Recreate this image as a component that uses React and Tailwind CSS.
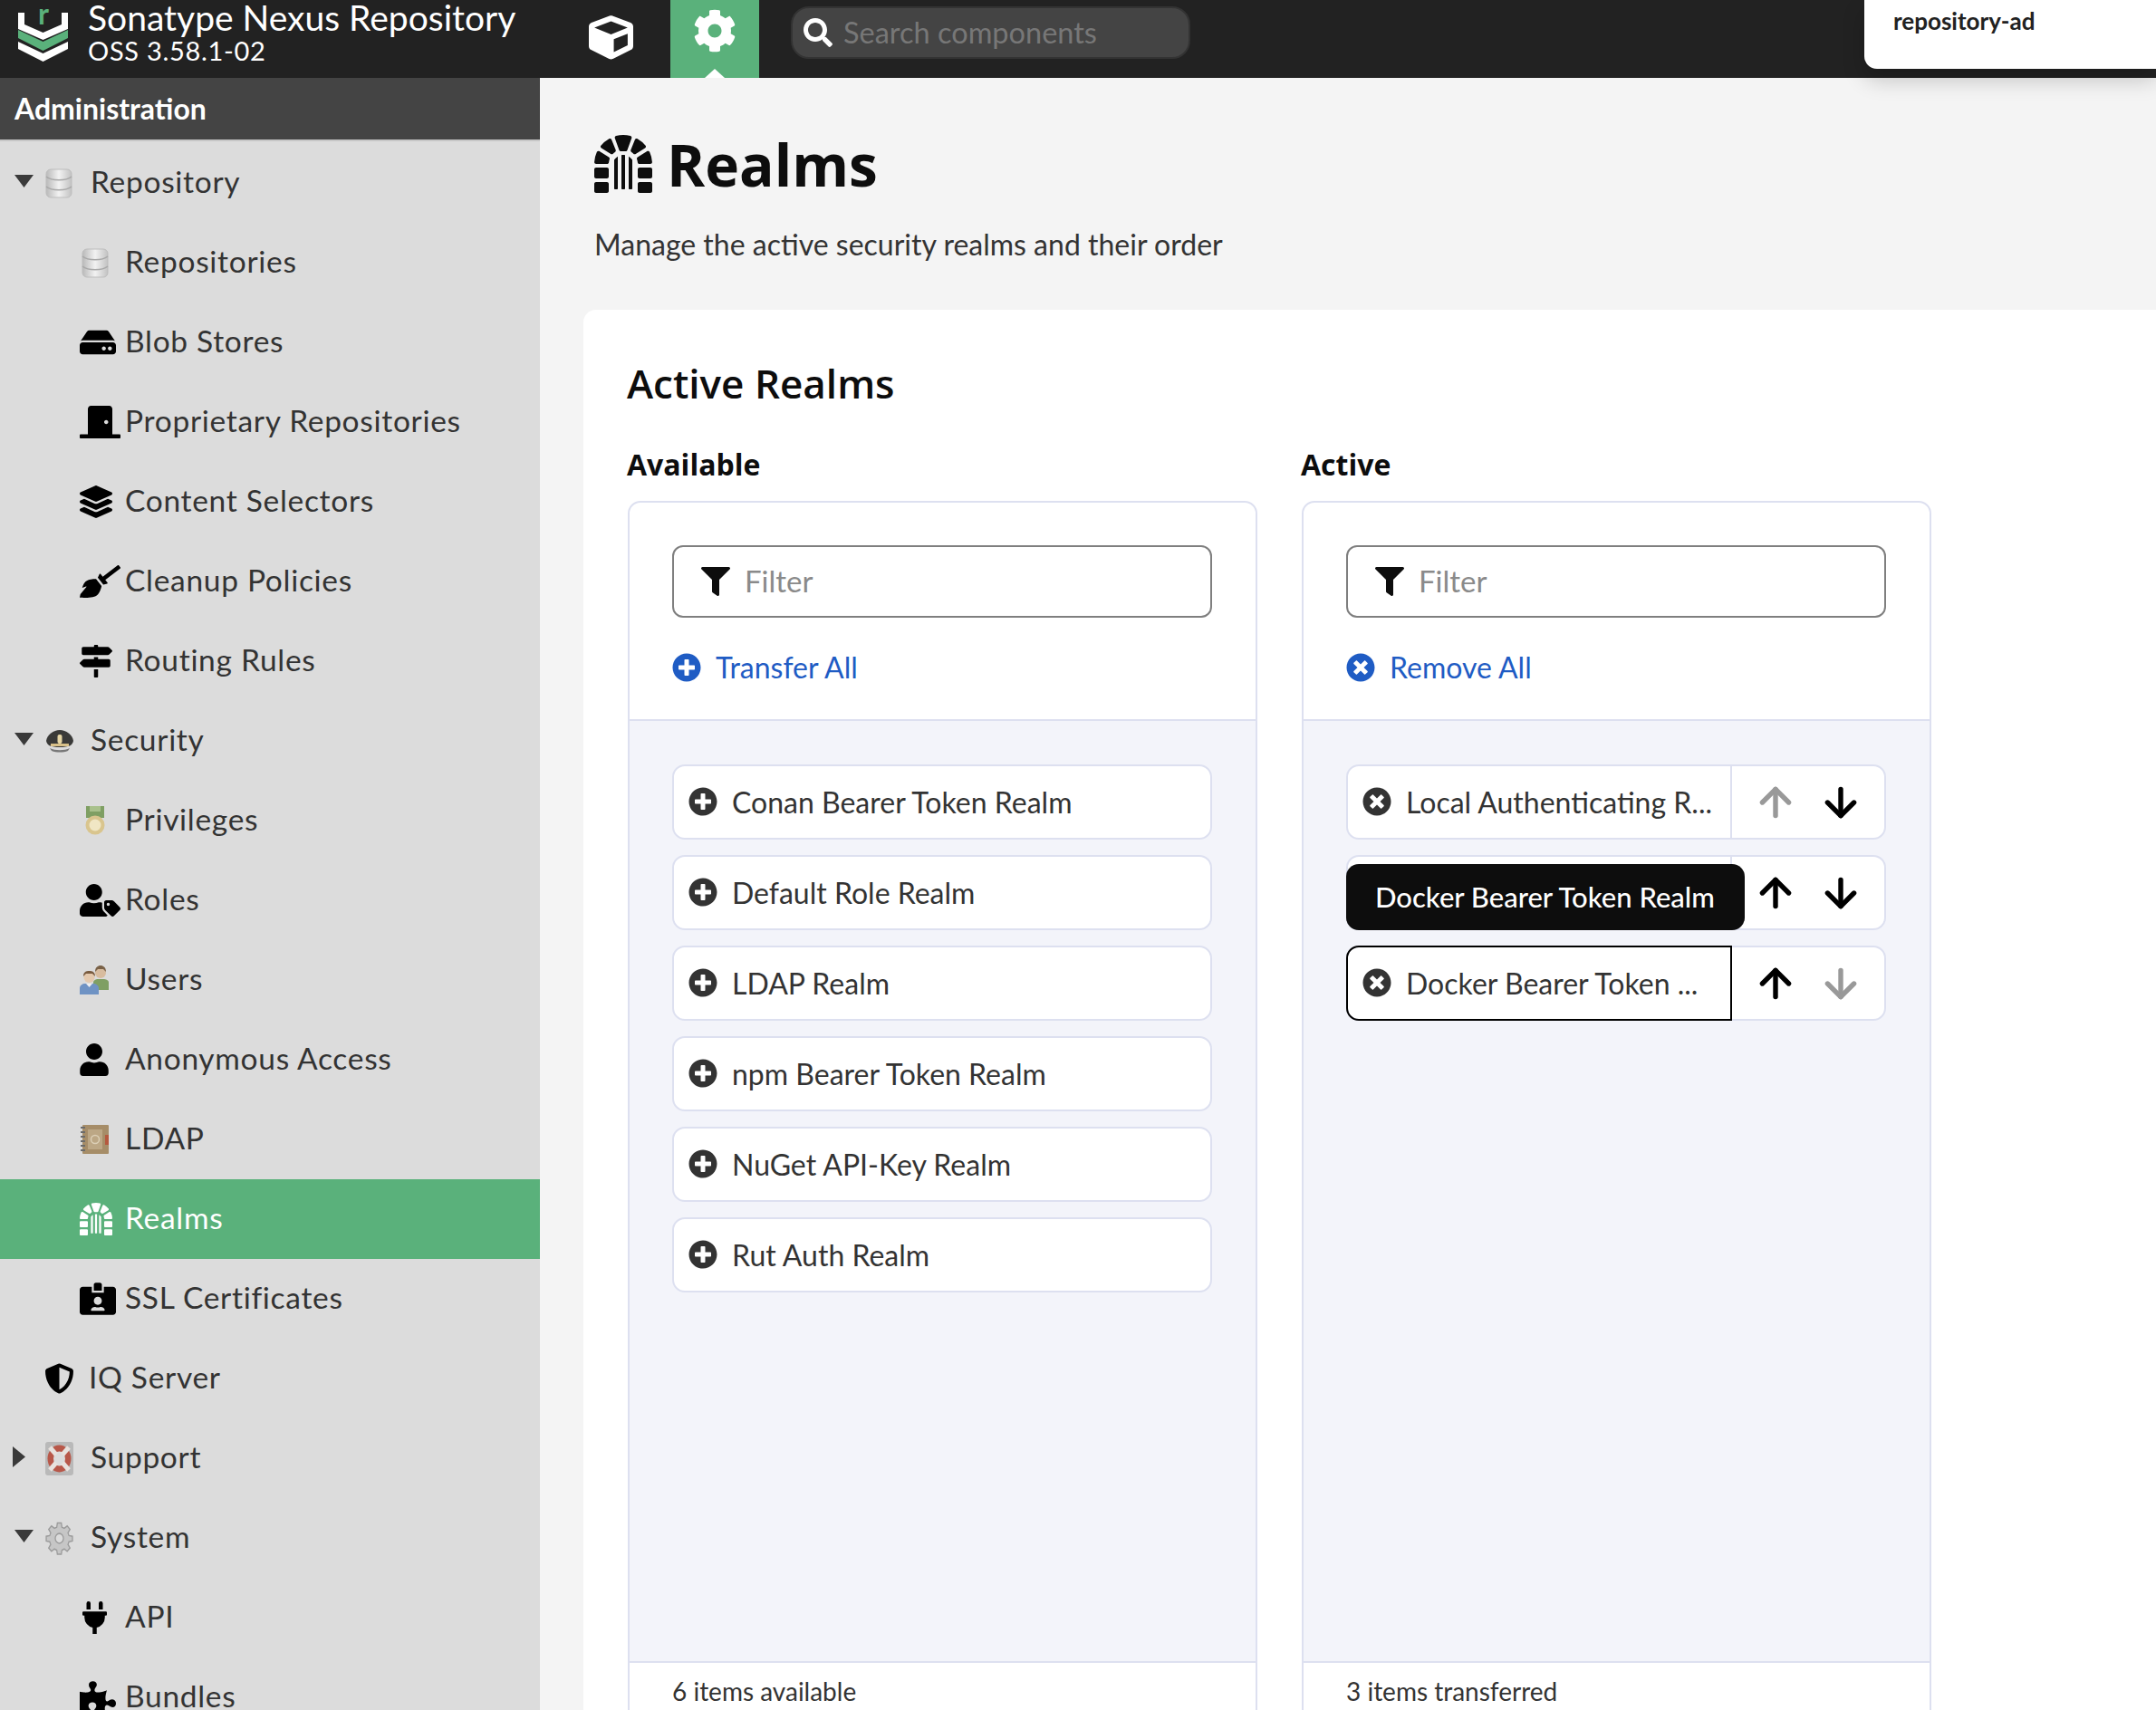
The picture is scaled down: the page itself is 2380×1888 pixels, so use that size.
import {
  FaCube, FaCog, FaSearch, FaFilter, FaPlusCircle, FaTimesCircle, FaHdd, FaDoorClosed, FaLayerGroup,
  FaBroom, FaMapSigns, FaUserTag, FaUser, FaDungeon, FaIdCardAlt, FaShieldAlt, FaPlug, FaPuzzlePiece,
} from "react-icons/fa";
import { ArrowUp, ArrowDown } from "lucide-react";

const PROXIMA = "font-['Lato','Noto_Sans',sans-serif]";
const HEADING = "font-['Open_Sans','Noto_Sans',sans-serif]";

const Logo = () => (
  <svg width="55" height="60" viewBox="0 0 55 60" className="shrink-0 -translate-y-[5px]">
    <path d="M0 6h7v13l20.500 9 20.500-9V6h7v18L27.500 36 0 24z" fill="#fff" />
    <path d="M0 25l27.500 13L55 25v9L27.500 48 0 34z" fill="#5ab17b" />
    <path d="M0 38l27.500 13L55 38v8L27.500 60 0 46z" fill="#fff" />
    <text x="22" y="19" fontSize="32" fontWeight="700" fill="#5ab17b" fontFamily="Lato, sans-serif">r</text>
  </svg>
);

const Database = () => (
  <svg width="30" height="33" viewBox="0 0 30 33">
    <defs>
      <linearGradient id="db" x1="0" x2="1" y1="0" y2="0">
        <stop offset="0" stopColor="#b9b9b9" />
        <stop offset="0.5" stopColor="#f2f2f2" />
        <stop offset="1" stopColor="#c2c2c2" />
      </linearGradient>
    </defs>
    <rect x="1" y="1" width="28" height="31" rx="5" fill="url(#db)" stroke="#bdbdbd" />
    <path d="M1 9c6 5 22 5 28 0M1 20c6 5 22 5 28 0" fill="none" stroke="#a8a8a8" strokeWidth="1.5" />
  </svg>
);

const Hat = () => (
  <svg width="32" height="26" viewBox="0 0 32 26">
    <path d="M1 13C2 6 9 1 16 1s14 5 15 12c-1 5-5 7-15 7S2 18 1 13z" fill="#3a3a38" />
    <path d="M5 21c6 3 16 3 22 0l-2 3c-5 2-13 2-18 0z" fill="#777" />
    <rect x="6" y="16" width="20" height="3" fill="#d8c088" />
    <rect x="13.500" y="6" width="5" height="10" rx="2" fill="#e6d6a4" />
  </svg>
);

const Medal = () => (
  <svg width="22" height="33" viewBox="0 0 22 33">
    <rect x="1" y="0" width="20" height="13" fill="#7f9f63" />
    <rect x="5" y="0" width="12" height="6" fill="#a9c18c" />
    <circle cx="11" cy="21" r="10.500" fill="#d9c58e" />
    <circle cx="11" cy="21" r="6.500" fill="#f0e6c4" />
  </svg>
);

const Users = () => (
  <svg width="33" height="32" viewBox="0 0 33 32">
    <path d="M15 27v-8c0-3 3-4 5-4h6c3 0 6 1 6 4v8z" fill="#7f9f63" />
    <circle cx="23" cy="8" r="6" fill="#d8bc9f" />
    <path d="M17 7c0-5 3-7 6-7s6 2 6 7l-3-3h-6z" fill="#7a6248" />
    <path d="M0 32v-7c0-3 3-5 6-5h9c3 0 6 2 6 5v7z" fill="#6f93c4" />
    <path d="M7 20h7l-3.500 4z" fill="#f0f0f0" />
    <circle cx="10.500" cy="13" r="6" fill="#e4c9ae" />
    <path d="M4 12c0-5 3-6 6.500-6s6.500 1 6.500 6l-3-3H7z" fill="#7a5c40" />
  </svg>
);

const Ldap = () => (
  <svg width="32" height="32" viewBox="0 0 32 32">
    <rect x="3" y="0" width="29" height="32" rx="1" fill="#a68d68" />
    <rect x="28" y="11" width="4" height="11" fill="#b5593e" />
    <path d="M1 3h5M1 8h5M1 13h5M1 18h5M1 23h5M1 28h5" stroke="#6b6b6b" strokeWidth="2" />
    <rect x="9" y="5" width="16" height="22" fill="#bca785" />
    <circle cx="17" cy="16" r="4.500" fill="none" stroke="#dccfb6" strokeWidth="1.500" />
  </svg>
);

const Lifebuoy = () => (
  <svg width="31" height="37" viewBox="0 0 31 37">
    <rect x="0" y="0" width="31" height="37" rx="3" fill="#b9b9b9" />
    <ellipse cx="15.500" cy="18.500" rx="13" ry="15" fill="#b8584a" />
    <ellipse cx="15.500" cy="18.500" rx="6.500" ry="8" fill="#dcdcdc" />
    <path d="M5 6l7 8M26 6l-7 8M5 31l7-8M26 31l-7-8" stroke="#e8e2de" strokeWidth="5" />
  </svg>
);

const SystemGear = () => (
  <svg width="31" height="37" viewBox="0 0 24 24" preserveAspectRatio="none">
    <path
      d="M12 8.500a3.500 3.500 0 1 0 0 7 3.500 3.500 0 0 0 0-7zM10.300 1h3.400l.5 3 2 .8 2.500-1.700 2.400 2.400-1.700 2.500.8 2 3 .5v3.400l-3 .5-.8 2 1.700 2.500-2.400 2.400-2.500-1.700-2 .8-.5 3h-3.400l-.5-3-2-.8-2.500 1.700-2.400-2.400 1.700-2.500-.8-2-3-.5v-3.400l3-.5.8-2-1.700-2.500 2.400-2.400 2.500 1.700 2-.8z"
      fill="#c6c6c6"
      stroke="#9b9b9b"
      strokeWidth="1"
    />
  </svg>
);

const Caret = ({ open }) =>
  open ? (
    <svg width="21" height="14" viewBox="0 0 21 14" className="absolute left-[16px] top-[35px]">
      <path d="M0 0h21L10.500 14z" fill="#3a3a3a" />
    </svg>
  ) : (
    <svg width="14" height="23" viewBox="0 0 14 23" className="absolute left-[14px] top-[31px]">
      <path d="M0 0l14 11.500L0 23z" fill="#3a3a3a" />
    </svg>
  );

const navItems = [
  { label: "Repository", icon: <Database />, top: true, open: true },
  { label: "Repositories", icon: <Database />, iconClass: "pl-[2px]" },
  { label: "Blob Stores", icon: <FaHdd className="h-[40px] w-[40px] text-black" /> },
  { label: "Proprietary Repositories", icon: <FaDoorClosed className="h-[36px] w-[45px] text-black" /> },
  { label: "Content Selectors", icon: <FaLayerGroup className="h-[36px] w-[36px] text-black" /> },
  { label: "Cleanup Policies", icon: <FaBroom className="h-[36px] w-[45px] text-black" /> },
  { label: "Routing Rules", icon: <FaMapSigns className="h-[36px] w-[36px] text-black" /> },
  { label: "Security", icon: <Hat />, top: true, open: true },
  { label: "Privileges", icon: <Medal />, iconClass: "pl-[6px]" },
  { label: "Roles", icon: <FaUserTag className="h-[36px] w-[45px] text-black" /> },
  { label: "Users", icon: <Users /> },
  { label: "Anonymous Access", icon: <FaUser className="h-[36px] w-[32px] text-black" /> },
  { label: "LDAP", icon: <Ldap /> },
  { label: "Realms", icon: <FaDungeon className="h-[36px] w-[36px] text-white" />, active: true },
  { label: "SSL Certificates", icon: <FaIdCardAlt className="h-[36px] w-[40px] text-black" /> },
  { label: "IQ Server", icon: <FaShieldAlt className="h-[40px] w-[33px] text-black" />, top: true, plain: true },
  { label: "Support", icon: <Lifebuoy />, top: true, open: false },
  { label: "System", icon: <SystemGear />, top: true, open: true },
  { label: "API", icon: <FaPlug className="h-[40px] w-[27px] text-black" />, iconClass: "pl-[3px]" },
  { label: "Bundles", icon: <FaPuzzlePiece className="h-[40px] w-[40px] text-black" /> },
];

const NavRow = ({ item }) => (
  <div
    className={`relative flex h-[88px] shrink-0 items-center text-[33.5px] tracking-[0.7px] ${item.top ? (item.plain ? "pl-[49px]" : "pl-[50px]") : "pl-[88px]"} ${item.active ? "bg-[#5ab17b] text-white" : "text-[#333]"}`}
  >
    {item.top && !item.plain && <Caret open={item.open} />}
    <div className={`shrink-0 ${item.plain ? "w-[49px]" : "w-[50px]"} ${item.iconClass || ""}`}>{item.icon}</div>
    <span className="-translate-y-[2px]">{item.label}</span>
  </div>
);

const Sidebar = () => (
  <aside className="flex w-[596px] shrink-0 flex-col bg-[#dcdcdc]">
    <div className="mb-[2px] flex h-[70px] shrink-0 items-center border-b-2 border-[#c6c6c6] bg-[#444] pl-[16px] text-[32px] font-bold text-white">
      Administration
    </div>
    {navItems.map((item) => (
      <NavRow key={item.label} item={item} />
    ))}
  </aside>
);

const TopBar = () => (
  <header className="relative flex h-[86px] shrink-0 items-center bg-[#222] text-white">
    <div className="flex w-[650px] shrink-0 items-center pl-[20px]">
      <Logo />
      <div className="ml-[22px] flex -translate-y-[6px] flex-col">
        <span className="text-[39px] leading-[38px]">Sonatype Nexus Repository</span>
        <span className="text-[29px] leading-[36px] tracking-[0.7px]">OSS 3.58.1-02</span>
      </div>
    </div>
    <FaCube size={49} className="-translate-y-[2px]" />
    <div className="relative ml-[41px] flex h-[86px] w-[98px] shrink-0 items-center justify-center bg-[#5ab17b]">
      <FaCog size={48} className="-translate-y-[9px]" />
      <div className="absolute bottom-0 left-[38px] h-0 w-0 border-x-[11px] border-b-[10px] border-x-transparent border-b-white" />
    </div>
    <div className="ml-[35px] flex h-[58px] w-[441px] -translate-y-[7px] items-center rounded-[20px] border-2 border-[#333] bg-[#444] pl-[12px]">
      <FaSearch size={32} className="text-white" />
      <span className="ml-[12px] text-[32.5px] text-[#777]">Search components</span>
    </div>
    <div className="absolute right-0 top-0 flex h-[76px] w-[322px] items-start rounded-bl-[14px] bg-white pl-[32px] pt-[4px] text-[26px] font-bold text-[#222] shadow-[0_12px_24px_rgba(0,0,0,0.2)]">
      repository-ad
    </div>
  </header>
);

const FilterBox = () => (
  <div className="flex h-[80px] items-center rounded-[12px] border-2 border-[#7f7f7f] bg-white pl-[30px]">
    <FaFilter size={32} className="text-[#0d0d0d]" />
    <span className="ml-[16px] text-[33px] text-[#8a8a8a]">Filter</span>
  </div>
);

const Panel = ({ action, children, footer }) => (
  <div className="flex h-[1400px] w-[695px] shrink-0 flex-col rounded-t-[14px] border-2 border-[#dde0f0]">
    <div className="h-[241px] shrink-0 border-b-2 border-[#dde0f0] pl-[47px] pr-[48px] pt-[47px]">
      <FilterBox />
      <div className="mt-[37px] flex items-center text-[32px] leading-[36px] text-[#1f5cc4]">{action}</div>
    </div>
    <div className="relative flex h-[1040px] shrink-0 flex-col gap-[17px] border-b-2 border-[#dde0f0] bg-[#f3f4fa] pl-[47px] pr-[48px] pt-[48px]">
      {children}
    </div>
    <div className="px-[47px] pt-[13px] text-[28px] leading-[36px] text-[#333]">{footer}</div>
  </div>
);

const AvailableRow = ({ label }) => (
  <div className="flex h-[83px] items-center rounded-[14px] border-2 border-[#dde0f0] bg-white pl-[16px] text-[32px] text-[#333]">
    <FaPlusCircle size={32} className="shrink-0 -translate-y-[1px]" />
    <span className="ml-[16px]">{label}</span>
  </div>
);

const ActiveRow = ({ label, selected, upOff, downOff }) => (
  <div className="relative flex h-[83px] items-stretch rounded-[14px] border-2 border-[#dde0f0] bg-white text-[32px] text-[#333]">
    <div
      className={`flex shrink-0 items-center pl-[16px] ${selected ? "-my-[2px] -ml-[2px] w-[426px] rounded-l-[14px] border-2 border-black" : "w-[424px] border-r-2 border-[#dde0f0]"}`}
    >
      <FaTimesCircle size={32} className="shrink-0 -translate-y-[1px]" />
      <span className="ml-[16px] whitespace-nowrap">{label}</span>
    </div>
    <div className="flex flex-1 items-center pl-[23px]">
      <ArrowUp size={50} strokeWidth={2.6} className={upOff ? "text-[#999]" : "text-black"} />
      <ArrowDown size={50} strokeWidth={2.6} className={`ml-[22px] ${downOff ? "text-[#999]" : "text-black"}`} />
    </div>
  </div>
);

const Main = () => (
  <main className="min-w-0 flex-1 bg-[#f4f4f4] pl-[48px]">
    <div className="flex h-[128px] items-end pl-[12px]">
      <FaDungeon size={64} className="mb-[1px] text-[#0d0d0d]" />
      <h1 className={`ml-[16px] translate-y-[4px] text-[64px] font-bold leading-[72px] text-[#0d0d0d] ${HEADING}`}>Realms</h1>
    </div>
    <p className="mt-[36px] pl-[12px] text-[32px] leading-[40px] text-[#333]">Manage the active security realms and their order</p>
    <section className="ml-0 mt-[52px] h-[1600px] rounded-tl-[14px] bg-white pl-[49px] pt-[51px]">
      <h2 className={`-ml-[1px] text-[44px] font-semibold leading-[60px] text-[#0d0d0d] ${HEADING}`}>Active Realms</h2>
      <div className="mt-[38px] flex gap-[49px]">
        <div>
          <h3 className={`-ml-[1px] mb-[18px] text-[32px] font-bold leading-[44px] text-[#0d0d0d] ${HEADING}`}>Available</h3>
          <Panel
            footer="6 items available"
            action={
              <>
                <FaPlusCircle size={32} />
                <span className="ml-[16px]">Transfer All</span>
              </>
            }
          >
            {["Conan Bearer Token Realm", "Default Role Realm", "LDAP Realm", "npm Bearer Token Realm", "NuGet API-Key Realm", "Rut Auth Realm"].map((name) => (
              <AvailableRow key={name} label={name} />
            ))}
          </Panel>
        </div>
        <div>
          <h3 className={`-ml-[1px] mb-[18px] text-[32px] font-bold leading-[44px] text-[#0d0d0d] ${HEADING}`}>Active</h3>
          <Panel
            footer="3 items transferred"
            action={
              <>
                <FaTimesCircle size={32} />
                <span className="ml-[16px]">Remove All</span>
              </>
            }
          >
            <ActiveRow label="Local Authenticating R..." upOff />
            <ActiveRow label="" />
            <ActiveRow label="Docker Bearer Token ..." selected downOff />
            <div className="absolute left-[47px] top-[158px] flex h-[73px] w-[440px] items-center rounded-[14px] bg-[#0d0d0d] pl-[32px] text-[31px] font-medium text-white">
              Docker Bearer Token Realm
            </div>
          </Panel>
        </div>
      </div>
    </section>
  </main>
);

export default function App() {
  return (
    <div className={`flex h-[1888px] w-[2380px] flex-col overflow-hidden ${PROXIMA}`}>
      <TopBar />
      <div className="flex min-h-0 flex-1">
        <Sidebar />
        <Main />
      </div>
    </div>
  );
}
